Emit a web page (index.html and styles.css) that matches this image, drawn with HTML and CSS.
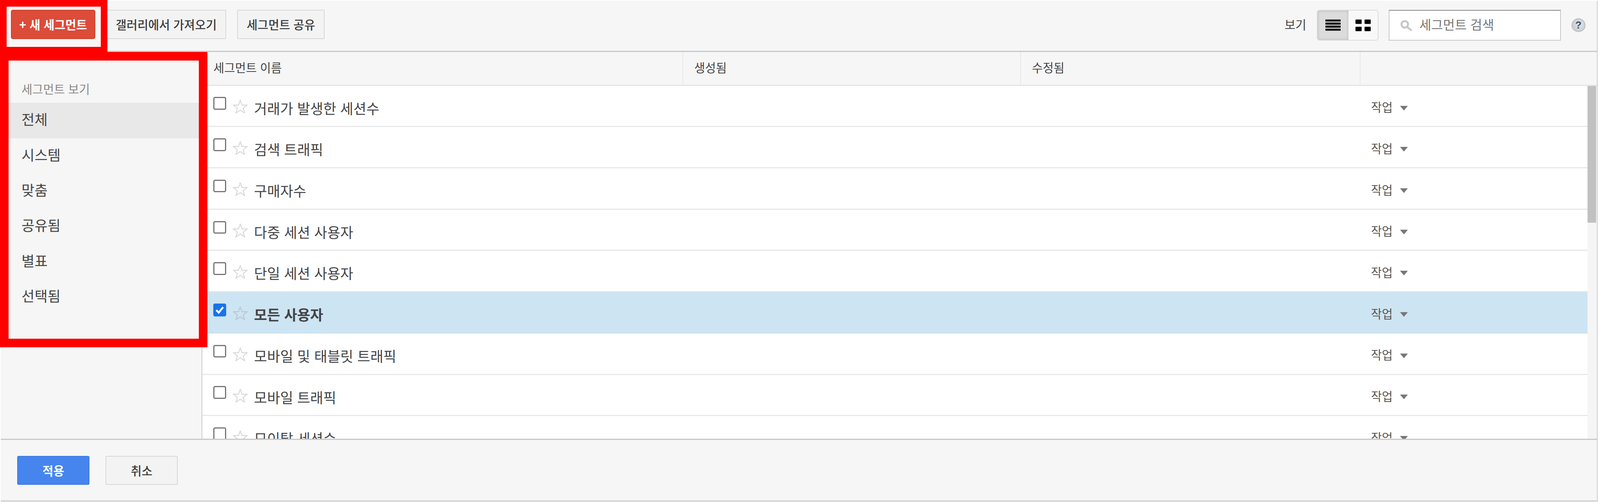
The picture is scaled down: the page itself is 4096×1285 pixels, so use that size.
FILE: index.html
```html
<!DOCTYPE html>
<html lang="ko">
<head>
<meta charset="utf-8">
<title>세그먼트</title>
<link rel="stylesheet" href="styles.css">
</head>
<body>
<div class="app">
  <header class="toolbar">
    <button class="btn btn-red">+ 새 세그먼트</button>
    <button class="btn">갤러리에서 가져오기</button>
    <button class="btn">세그먼트 공유</button>
    <span class="view-label">보기</span>
    <div class="toggle">
      <span class="toggle-item on"><svg class="icon-list" viewBox="0 0 42 31"><rect width="42" height="5.5" y="0" rx="1"/><rect width="42" height="5.5" y="8.4" rx="1"/><rect width="42" height="5.5" y="16.8" rx="1"/><rect width="42" height="5.5" y="25.2" rx="1"/></svg></span>
      <span class="toggle-item"><svg class="icon-grid" viewBox="0 0 42 32"><rect width="17" height="12" rx="1.5"/><rect x="25" width="17" height="12" rx="1.5"/><rect y="20" width="17" height="12" rx="1.5"/><rect x="25" y="20" width="17" height="12" rx="1.5"/></svg></span>
    </div>
    <div class="search">
      <svg class="search-icon" viewBox="0 0 33 30"><circle cx="12" cy="11" r="9" fill="none" stroke="#c8c8c8" stroke-width="5.5"/><path d="M18 18l13 10" stroke="#c8c8c8" stroke-width="5.5" fill="none"/></svg>
      <span>세그먼트 검색</span>
    </div>
    <span class="help">?</span>
  </header>
  <div class="main">
    <nav class="side">
      <div class="side-title">세그먼트 보기</div>
      <div class="side-item active">전체</div>
      <div class="side-item">시스템</div>
      <div class="side-item">맞춤</div>
      <div class="side-item">공유됨</div>
      <div class="side-item">별표</div>
      <div class="side-item">선택됨</div>
    </nav>
    <section class="table">
      <div class="thead">
        <div class="th th-name">세그먼트 이름</div>
        <div class="th th-date">생성됨</div>
        <div class="th th-date2">수정됨</div>
        <div class="th th-act"></div>
      </div>
      <div class="tbody">
        <div class="rows">
          <div class="row"><span class="check"></span><svg class="star" viewBox="0 0 41 38"><path d="M20.5 2l5 13h14l-11 9 4 13-12-8-12 8 4-13-11-9h14z"/></svg><span class="name">거래가 발생한 세션수</span><span class="act">작업<i class="caret"></i></span></div>
          <div class="row"><span class="check"></span><svg class="star" viewBox="0 0 41 38"><path d="M20.5 2l5 13h14l-11 9 4 13-12-8-12 8 4-13-11-9h14z"/></svg><span class="name">검색 트래픽</span><span class="act">작업<i class="caret"></i></span></div>
          <div class="row"><span class="check"></span><svg class="star" viewBox="0 0 41 38"><path d="M20.5 2l5 13h14l-11 9 4 13-12-8-12 8 4-13-11-9h14z"/></svg><span class="name">구매자수</span><span class="act">작업<i class="caret"></i></span></div>
          <div class="row"><span class="check"></span><svg class="star" viewBox="0 0 41 38"><path d="M20.5 2l5 13h14l-11 9 4 13-12-8-12 8 4-13-11-9h14z"/></svg><span class="name">다중 세션 사용자</span><span class="act">작업<i class="caret"></i></span></div>
          <div class="row"><span class="check"></span><svg class="star" viewBox="0 0 41 38"><path d="M20.5 2l5 13h14l-11 9 4 13-12-8-12 8 4-13-11-9h14z"/></svg><span class="name">단일 세션 사용자</span><span class="act">작업<i class="caret"></i></span></div>
          <div class="row selected"><span class="check checked"><svg viewBox="0 0 35 35"><path d="M8 18l7 7 12-15" fill="none" stroke="#fff" stroke-width="5"/></svg></span><svg class="star" viewBox="0 0 41 38"><path d="M20.5 2l5 13h14l-11 9 4 13-12-8-12 8 4-13-11-9h14z"/></svg><span class="name">모든 사용자</span><span class="act">작업<i class="caret"></i></span></div>
          <div class="row"><span class="check"></span><svg class="star" viewBox="0 0 41 38"><path d="M20.5 2l5 13h14l-11 9 4 13-12-8-12 8 4-13-11-9h14z"/></svg><span class="name">모바일 및 태블릿 트래픽</span><span class="act">작업<i class="caret"></i></span></div>
          <div class="row"><span class="check"></span><svg class="star" viewBox="0 0 41 38"><path d="M20.5 2l5 13h14l-11 9 4 13-12-8-12 8 4-13-11-9h14z"/></svg><span class="name">모바일 트래픽</span><span class="act">작업<i class="caret"></i></span></div>
          <div class="row"><span class="check"></span><svg class="star" viewBox="0 0 41 38"><path d="M20.5 2l5 13h14l-11 9 4 13-12-8-12 8 4-13-11-9h14z"/></svg><span class="name">모이탈 세션수</span><span class="act">작업<i class="caret"></i></span></div>
        </div>
        <div class="track"><div class="thumb"></div></div>
      </div>
    </section>
  </div>
  <footer class="footer">
    <button class="btn btn-blue">적용</button>
    <button class="btn btn-cancel">취소</button>
  </footer>
</div>
<div class="frame frame-top"></div>
<div class="frame frame-side"></div>
</body>
</html>
```
FILE: styles.css
```css
html, body { margin: 0; padding: 0; background: #fff; overflow: hidden; }
body {
  width: 4096px;
  height: 1285px;
  position: relative;
  font-family: "Noto Sans CJK KR", "Liberation Sans", sans-serif;
  color: #444;
}
* { box-sizing: border-box; }

.app {
  width: 4089.5px;
  height: 1284px;
  padding: 2px 0 0 2px;
  display: flex;
  flex-direction: column;
}

.toolbar {
  height: 131.2px;
  flex: none;
  display: flex;
  align-items: flex-start;
  padding: 23.3px 29px 0 26px;
  background: #f6f6f6;
  border-bottom: 3px solid #c8c8c8;
  border-right: 2px solid #ccc;
}
.btn {
  height: 74.4px;
  padding: 0 22.5px;
  margin-right: 27.9px;
  font: 500 30.2px/1 "Noto Sans CJK KR", sans-serif;
  color: #3c3c3c;
  background: #f3f3f3;
  border: 2px solid #d8d8d8;
  border-radius: 3px;
}
.btn-red {
  width: 215.9px;
  padding: 0;
  color: #fff;
  font-weight: 700;
  background: #dd4b39;
  border-color: #d0442f;
  border-radius: 5px;
}
.view-label { margin: 18.6px 27px 0 auto; font-size: 30.2px; line-height: 37.2px; color: #444; }
.toggle { display: flex; width: 158.2px; height: 79.1px; border: 2px solid #dcdcdc; border-radius: 7.4px; overflow: hidden; }
.toggle-item { flex: 1; display: flex; align-items: center; justify-content: center; background: #f8f8f8; }
.toggle-item.on { flex: none; width: 79.1px; background: #dcdcdc; box-shadow: inset 0 0 7.4px rgba(0, 0, 0, .18); }
.icon-list { width: 39.1px; height: 28.8px; }
.icon-grid { width: 39.1px; height: 29.8px; }
.search {
  width: 441px;
  height: 79.1px;
  margin-left: 26px;
  padding: 0 0 7.4px 27.9px;
  display: flex;
  align-items: center;
  gap: 17.7px;
  background: #fff;
  border: 2px solid #c8c8c8;
  border-top: 3px solid #aaa;
  font-size: 33px;
  color: #777;
}
.search-icon { width: 30.7px; height: 27.9px; flex: none; margin-top: 9.3px; }
.help {
  width: 35.4px;
  height: 35.4px;
  margin: 21.4px 0 0 27px;
  border-radius: 50%;
  background: radial-gradient(circle at 60% 45%, #dbe3ea, #c2c6ca);
  border: 2px solid #bdbdbd;
  color: #3d5068;
  font: 700 26px/31.4px "Liberation Sans", sans-serif;
  text-align: center;
}

.main { flex: 1; min-height: 0; display: flex; }
.side { width: 516.4px; flex: none; background: #f6f6f6; border-right: 2px solid #ccc; }
.side-title { height: 130.3px; padding: 76.3px 0 0 53px; font-size: 30.2px; line-height: 37.2px; color: #888; }
.side-item { height: 90.3px; padding-left: 53px; font-size: 36.3px; line-height: 83.7px; color: #444; }
.side-item.active { background: #e8e8e8; }

.table { flex: 1; min-width: 0; display: flex; flex-direction: column; border-right: 2px solid #ccc; background: #fff; }
.thead { height: 86.5px; flex: none; display: flex; background: #f6f6f6; border-bottom: 3px solid #e5e5e5; }
.th { padding-left: 27.9px; font-size: 30.2px; line-height: 79px; color: #444; border-right: 2px solid #e8e8e8; }
.th-name { width: 1231px; }
.th-date { width: 864.4px; }
.th-date2 { width: 869.1px; }
.th-act { flex: 1; border-right: 0; }

.tbody { flex: 1; min-height: 0; display: flex; overflow: hidden; }
.rows { flex: 1; min-width: 0; }
.row {
  height: 105.7px;
  padding-left: 27.9px;
  display: flex;
  align-items: flex-start;
  border-bottom: 3px solid #e8e8e8;
  background: #fff;
}
.row.selected { background: #cde4f2; border-bottom-color: #cde4f2; font-weight: 700; }
.check {
  width: 32.6px;
  height: 32.6px;
  margin-top: 28.8px;
  flex: none;
  border: 3px solid #767676;
  border-radius: 4.6px;
  background: #fff;
}
.check.checked { background: #1a73e8; border: 0; }
.check svg { display: block; width: 32.6px; height: 32.6px; }
.star { width: 38.1px; height: 35.4px; margin: 35.4px 0 0 16.7px; flex: none; fill: none; stroke: #d8d8d8; stroke-width: 2.5; }
.selected .star { stroke: #b9c7d1; }
.name { margin: 33px 0 0 16.7px; font-size: 36.3px; line-height: 46.5px; color: #444; }
.act { margin: 33.5px 0 0 auto; width: 554.4px; font-size: 30.2px; line-height: 40.9px; color: #555; font-weight: 400; }
.caret {
  display: inline-block;
  margin-left: 18.6px;
  vertical-align: 3.7px;
  border-top: 12.1px solid #777;
  border-left: 10.2px solid transparent;
  border-right: 10.2px solid transparent;
}
.track { width: 23.3px; flex: none; background: #f5f5f5; }
.thumb { width: 21.4px; height: 349.9px; background: #c1c1c1; }

.footer {
  height: 161px;
  flex: none;
  display: flex;
  align-items: flex-start;
  padding: 40.9px 0 0 41.9px;
  background: #f6f6f6;
  border-top: 3px solid #c8c8c8;
  border-bottom: 3px solid #ccc;
  border-right: 2px solid #ccc;
}
.footer .btn { width: 185.2px; height: 74.4px; padding: 0; margin-right: 40.9px; }
.btn-blue { color: #fff; font-weight: 700; background: #4685ee; border-color: #3f7be0; border-radius: 4px; }

.frame { position: absolute; left: 0; border-style: solid; border-color: #f00; }
.frame-top { top: 0; width: 274.5px; height: 133.1px; border-width: 17.7px 17.7px 13px; }
.frame-side { top: 133.1px; width: 531.3px; height: 755.6px; border-width: 22.3px; }
```
